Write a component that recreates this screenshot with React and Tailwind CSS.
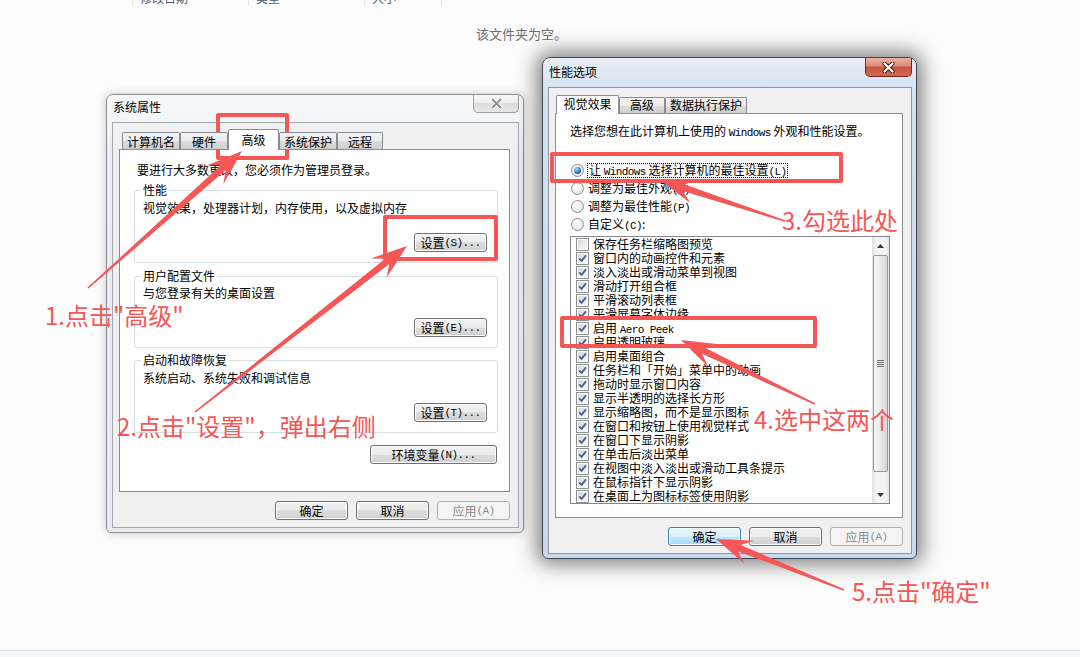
import React from 'react'

// small monospace run, stands in for SimSun's half-width latin
function Mono({ children }) {
  return <span className="font-['Liberation_Mono',monospace] text-[11px] leading-[10px] tracking-[-0.6px]">{children}</span>
}

function Btn({ className = '', variant = 'normal', children }) {
  const styles = {
    normal:
      'border-[#707070] bg-[linear-gradient(#f2f2f2_0%,#ebebeb_50%,#dddddd_50%,#cfcfcf_100%)] shadow-[inset_0_0_0_1px_#fcfcfc] text-black',
    focus:
      'border-[#3c7fb1] bg-[linear-gradient(#eaf6fd_0%,#d9f0fc_50%,#bee6fd_50%,#a7d9f5_100%)] shadow-[inset_0_0_0_1px_#f4fbfe] text-black',
    disabled: 'border-[#adb2b5] bg-[#f4f4f4] text-[#8a8a8a]',
  }
  return (
    <div className={`h-[19px] flex items-center justify-center rounded-[3px] border leading-[14px] ${styles[variant]} ${className}`}>
      {children}
    </div>
  )
}

function Tab({ cls, active, children }) {
  const look = active
    ? 'bg-white'
    : 'bg-[linear-gradient(#f2f2f2_0%,#ebebeb_50%,#dddddd_50%,#cfcfcf_100%)]'
  return (
    <div className={`${cls} ${look} border border-b-0 border-[#898c95] rounded-t-[2px] flex justify-center leading-[14px] whitespace-nowrap`}>
      {children}
    </div>
  )
}

function CloseBtn({ active }) {
  const look = active
    ? 'border-[#6b2a1f] bg-[linear-gradient(#eab1a4_0%,#dc8a78_45%,#c9533c_50%,#d2684e_100%)]'
    : 'border-[#9c9ea1] bg-[linear-gradient(#f7f7f7_0%,#ececec_45%,#dedede_50%,#e6e6e6_100%)]'
  return (
    <div className={`${active ? 'w-[47px] h-[19px]' : 'w-[46px] h-[18px]'} border border-t-0 rounded-b-[5px] flex items-center justify-center ${look}`}>
      <svg width="13" height="11" viewBox="0 0 13 11">
        {active ? (
          <>
            <path d="M2.5 1.5 L10.5 9.5 M10.5 1.5 L2.5 9.5" stroke="#3d1710" strokeWidth="4" strokeLinecap="round" />
            <path d="M2.5 1.5 L10.5 9.5 M10.5 1.5 L2.5 9.5" stroke="#ffffff" strokeWidth="2.2" strokeLinecap="round" />
          </>
        ) : (
          <>
            <path d="M2.5 1.5 L10.5 9.5 M10.5 1.5 L2.5 9.5" stroke="#ffffff" strokeWidth="3.6" strokeLinecap="round" />
            <path d="M2.5 1.5 L10.5 9.5 M10.5 1.5 L2.5 9.5" stroke="#8d8f93" strokeWidth="2" strokeLinecap="round" />
          </>
        )}
      </svg>
    </div>
  )
}

function Radio({ checked }) {
  return (
    <div className="w-[13px] h-[13px] shrink-0 rounded-full border border-[#8e8f8f] bg-[radial-gradient(circle_at_40%_35%,#ffffff,#ececec_60%,#d2d2d2)] flex items-center justify-center">
      {checked && (
        <div className="w-[7px] h-[7px] rounded-full bg-[radial-gradient(circle_at_35%_30%,#b6e1fb,#2f78b4_55%,#123f6b)]" />
      )}
    </div>
  )
}

function Check({ checked }) {
  return (
    <div className="w-[13px] h-[13px] shrink-0 border border-[#8e8f8f] bg-white p-px">
      <div className="w-full h-full bg-[linear-gradient(135deg,#d8d8d8,#f8f8f8)]">
        {checked && (
          <svg width="9" height="9" viewBox="0 0 9 9">
            <path d="M1.2 4.4 L3.6 6.9 L7.9 1.4" fill="none" stroke="#4a5f97" strokeWidth="1.9" />
          </svg>
        )}
      </div>
    </div>
  )
}

function GroupBox({ label, text, button, className = '' }) {
  return (
    <fieldset className={`ml-[14px] w-[364px] border border-[#d5dfe5] rounded-[3px] pl-[6px] ${className}`}>
      <legend className="px-[2px] leading-[14px]">{label}</legend>
      <div className={`pl-[2px] ${label === '用户配置文件' ? 'pt-[3px]' : 'pt-[4px]'}`}>{text}</div>
      <div className="flex justify-end mt-[18px] pr-[10px] pb-[10px]">
        <Btn className="w-[73px]">{button}</Btn>
      </div>
    </fieldset>
  )
}

function ExplorerHeader() {
  const cols = [
    { w: 'w-[133px]', label: '' },
    { w: 'w-[116px]', label: '修改日期' },
    { w: 'w-[116px]', label: '类型' },
    { w: 'w-[77px]', label: '大小' },
  ]
  return (
    <div className="h-[6px] flex overflow-hidden">
      {cols.map((c) => (
        <div key={c.w + c.label} className={`${c.w} h-full border-r border-[#e3e8ee] pl-[7px]`}>
          <div className="-mt-[9px] text-[#4c607a]">{c.label}</div>
        </div>
      ))}
    </div>
  )
}

function SystemProperties() {
  return (
    <div className="absolute left-[106px] top-[94px] w-[418px] h-[439px] flex flex-col rounded-t-[7px] rounded-b-[5px] border border-[#8b8f95] bg-[linear-gradient(#f8f9fa,#eceef1_60px,#e8eaed)] pl-[5px] pr-[4px] pb-[4px] shadow-[0_0_10px_rgba(0,0,0,0.22)]">
      <div className="h-[27px] flex justify-between items-start">
        <div className="pt-[5px] pl-px">系统属性</div>
        <CloseBtn />
      </div>
      <div className="flex-1 flex flex-col border border-[#a3a9b1] bg-[#f0f0f0] pl-[6px]">
        <div className="relative z-10 -mb-px flex items-end pt-[6px] pl-[3px]">
          <Tab cls="w-[58px] h-[17px] mb-px pt-[2px]">计算机名</Tab>
          <Tab cls="w-[48px] h-[17px] mb-px pt-[2px]">硬件</Tab>
          <Tab cls="w-[51px] h-[21px] pt-[3px]" active>高级</Tab>
          <Tab cls="w-[58px] h-[17px] mb-px pt-[2px]">系统保护</Tab>
          <Tab cls="w-[46px] h-[17px] mb-px pt-[2px]">远程</Tab>
        </div>
        <div className="w-[391px] h-[343px] border border-[#898c95] bg-white flex flex-col">
          <div className="mt-[13px] pl-[17px]">要进行大多数更改，您必须作为管理员登录。</div>
          <GroupBox
            className="mt-[6px]"
            label="性能"
            text="视觉效果，处理器计划，内存使用，以及虚拟内存"
            button={<>设置 <Mono>(S)...</Mono></>}
          />
          <GroupBox
            className="mt-[6px]"
            label="用户配置文件"
            text="与您登录有关的桌面设置"
            button={<>设置 <Mono>(E)...</Mono></>}
          />
          <GroupBox
            className="mt-[5px]"
            label="启动和故障恢复"
            text="系统启动、系统失败和调试信息"
            button={<>设置 <Mono>(T)...</Mono></>}
          />
          <div className="mt-[12px] flex justify-end pr-[12px]">
            <Btn className="w-[127px]">环境变量 <Mono>(N)...</Mono></Btn>
          </div>
        </div>
        <div className="mt-[9px] w-[391px] flex justify-end gap-[8px]">
          <Btn className="w-[73px]">确定</Btn>
          <Btn className="w-[73px]">取消</Btn>
          <Btn className="w-[73px]" variant="disabled">应用 <Mono>(A)</Mono></Btn>
        </div>
      </div>
    </div>
  )
}

const effects = [
  ['保存任务栏缩略图预览', false],
  ['窗口内的动画控件和元素', true],
  ['淡入淡出或滑动菜单到视图', true],
  ['滑动打开组合框', true],
  ['平滑滚动列表框', true],
  ['平滑屏幕字体边缘', true],
  ['AERO', true],
  ['启用透明玻璃', true],
  ['启用桌面组合', true],
  ['任务栏和「开始」菜单中的动画', true],
  ['拖动时显示窗口内容', true],
  ['显示半透明的选择长方形', true],
  ['显示缩略图，而不是显示图标', true],
  ['在窗口和按钮上使用视觉样式', true],
  ['在窗口下显示阴影', true],
  ['在单击后淡出菜单', true],
  ['在视图中淡入淡出或滑动工具条提示', true],
  ['在鼠标指针下显示阴影', true],
  ['在桌面上为图标标签使用阴影', true],
]

function ScrollBar() {
  return (
    <div className="w-[17px] flex flex-col bg-[linear-gradient(to_right,#e0e0e0,#f3f3f3_25%,#f3f3f3_75%,#e6e6e6)]">
      <div className="h-[17px] flex items-center justify-center">
        <svg width="7" height="4" viewBox="0 0 7 4"><path d="M0 4 L3.5 0 L7 4Z" fill="#3b3b3b" /></svg>
      </div>
      <div className="mt-px mx-px h-[217px] rounded-[2px] border border-[#979797] bg-[linear-gradient(to_right,#f6f6f6,#e9e9e9_50%,#d6d6d6)] flex items-center justify-center">
        <div className="flex flex-col gap-px">
          <div className="w-[7px] h-px bg-[#707070]" />
          <div className="w-[7px] h-px bg-[#707070]" />
          <div className="w-[7px] h-px bg-[#707070]" />
          <div className="w-[7px] h-px bg-[#707070]" />
        </div>
      </div>
      <div className="flex-1" />
      <div className="h-[17px] flex items-center justify-center">
        <svg width="7" height="4" viewBox="0 0 7 4"><path d="M0 0 L3.5 4 L7 0Z" fill="#3b3b3b" /></svg>
      </div>
    </div>
  )
}

function PerformanceOptions() {
  return (
    <div className="absolute left-[542px] top-[57px] w-[375px] h-[502px] flex flex-col rounded-t-[8px] rounded-b-[6px] border border-[#3e4650] bg-[linear-gradient(#e6edf5,#d3e1f1_40px,#c6d9ef)] pl-[5px] pr-[4px] pb-[4px] shadow-[0_0_20px_5px_rgba(0,0,0,0.5)]">
      <div className="h-[29px] flex justify-between items-start">
        <div className="pt-[7px] pl-px">性能选项</div>
        <CloseBtn active />
      </div>
      <div className="flex-1 flex flex-col border border-[#8d97a4] bg-[#f0f0f0] pl-[6px]">
        <div className="relative z-10 -mb-px flex items-end pt-[7px] pl-px">
          <Tab cls="w-[63px] h-[19px] pt-px" active>视觉效果</Tab>
          <Tab cls="w-[46px] h-[16px] mb-px">高级</Tab>
          <Tab cls="w-[82px] h-[16px] mb-px">数据执行保护</Tab>
        </div>
        <div className="w-[348px] h-[405px] border border-[#898c95] bg-white flex flex-col pl-[14px]">
          <div className="mt-[10px] h-[14px]">选择您想在此计算机上使用的 <Mono>Windows</Mono> 外观和性能设置。</div>
          <div className="mt-[23px] flex flex-col">
            <div className="h-[18px] flex items-center gap-[3px] pl-px">
              <Radio checked />
              <span className="border border-dotted border-black px-px leading-[12px]">
                让 <Mono>Windows</Mono> 选择计算机的最佳设置<Mono>(L)</Mono>
              </span>
            </div>
            <div className="h-[18px] flex items-center gap-[4px] pl-px">
              <Radio />
              <span>调整为最佳外观<Mono>(A)</Mono></span>
            </div>
            <div className="h-[18px] flex items-center gap-[4px] pl-px">
              <Radio />
              <span>调整为最佳性能<Mono>(P)</Mono></span>
            </div>
            <div className="h-[18px] flex items-center gap-[4px] pl-px">
              <Radio />
              <span>自定义<Mono>(C)</Mono>:</span>
            </div>
          </div>
          <div className="mt-[3px] w-[320px] h-[268px] border border-[#828790] bg-white flex">
            <div className="flex-1 flex flex-col pl-[5px]">
              {effects.map(([label, on]) => (
                <div key={label} className="h-[14px] flex items-center gap-[4px] whitespace-nowrap">
                  <Check checked={on} />
                  {label === 'AERO' ? (
                    <span>启用 <Mono>Aero Peek</Mono></span>
                  ) : (
                    <span>{label}</span>
                  )}
                </div>
              ))}
            </div>
            <ScrollBar />
          </div>
        </div>
        <div className="mt-[9px] w-[348px] flex justify-end gap-[8px]">
          <Btn className="w-[73px]" variant="focus">确定</Btn>
          <Btn className="w-[73px]">取消</Btn>
          <Btn className="w-[73px]" variant="disabled">应用 <Mono>(A)</Mono></Btn>
        </div>
      </div>
    </div>
  )
}

// tapered annotation arrow: thin tail, swept-back head
function arrowPoints(x1, y1, x2, y2) {
  const dx = x2 - x1
  const dy = y2 - y1
  const L = Math.hypot(dx, dy)
  const ux = dx / L
  const uy = dy / L
  const nx = -uy
  const ny = ux
  const p = (d, w) => `${(x1 + ux * d + nx * w).toFixed(1)},${(y1 + uy * d + ny * w).toFixed(1)}`
  return [p(0, 0.8), p(L - 25, 3.4), p(L - 36, 12.5), p(L, 0), p(L - 36, -12.5), p(L - 25, -3.4), p(0, -0.8)].join(' ')
}

const RED = '#f55656'

const arrows = [
  [88, 288, 242, 151],
  [195, 412, 407, 246],
  [785, 221, 660, 180],
  [815, 404, 681, 340],
  [844, 590, 716, 539],
]

const notes = [
  { pos: 'left-[45px] top-[303px]', text: '1.点击"高级"' },
  { pos: 'left-[117px] top-[414px]', text: '2.点击"设置"，弹出右侧' },
  { pos: 'left-[782px] top-[208px]', text: '3.勾选此处' },
  { pos: 'left-[754px] top-[407px]', text: '4.选中这两个' },
  { pos: 'left-[852px] top-[579px]', text: '5.点击"确定"' },
]

function Annotations() {
  return (
    <div className="absolute inset-0 pointer-events-none">
      <svg className="absolute inset-0" width="1080" height="657">
        <g fill="none" stroke={RED} strokeWidth="4" strokeLinejoin="round">
          <rect x="218" y="115" width="69" height="43" />
          <rect x="385" y="217" width="111" height="42" />
          <rect x="552" y="154" width="289" height="27" />
          <rect x="562" y="318" width="253" height="28" />
        </g>
        {arrows.map((a) => (
          <polygon key={a.join('-')} points={arrowPoints(...a)} fill={RED} />
        ))}
      </svg>
      {notes.map((n) => (
        <div key={n.text} className={`absolute ${n.pos} text-[24px] leading-[24px] text-[#f55656] whitespace-nowrap`}>
          {n.text}
        </div>
      ))}
    </div>
  )
}

export default function App() {
  return (
    <div className="relative w-[1080px] h-[657px] overflow-hidden bg-[#fcfcfc] font-['Noto_Sans_CJK_SC',sans-serif] text-[12px] leading-[14px] text-black flex flex-col">
      <ExplorerHeader />
      <div className="mt-[19px] pl-[476px] text-[13px] leading-[18px] text-[#6d6d6d]">该文件夹为空。</div>
      <div className="flex-1" />
      <div className="h-[7px] border-t border-[#d6e3f3] bg-[#f3f7fc]" />
      <SystemProperties />
      <PerformanceOptions />
      <Annotations />
    </div>
  )
}
